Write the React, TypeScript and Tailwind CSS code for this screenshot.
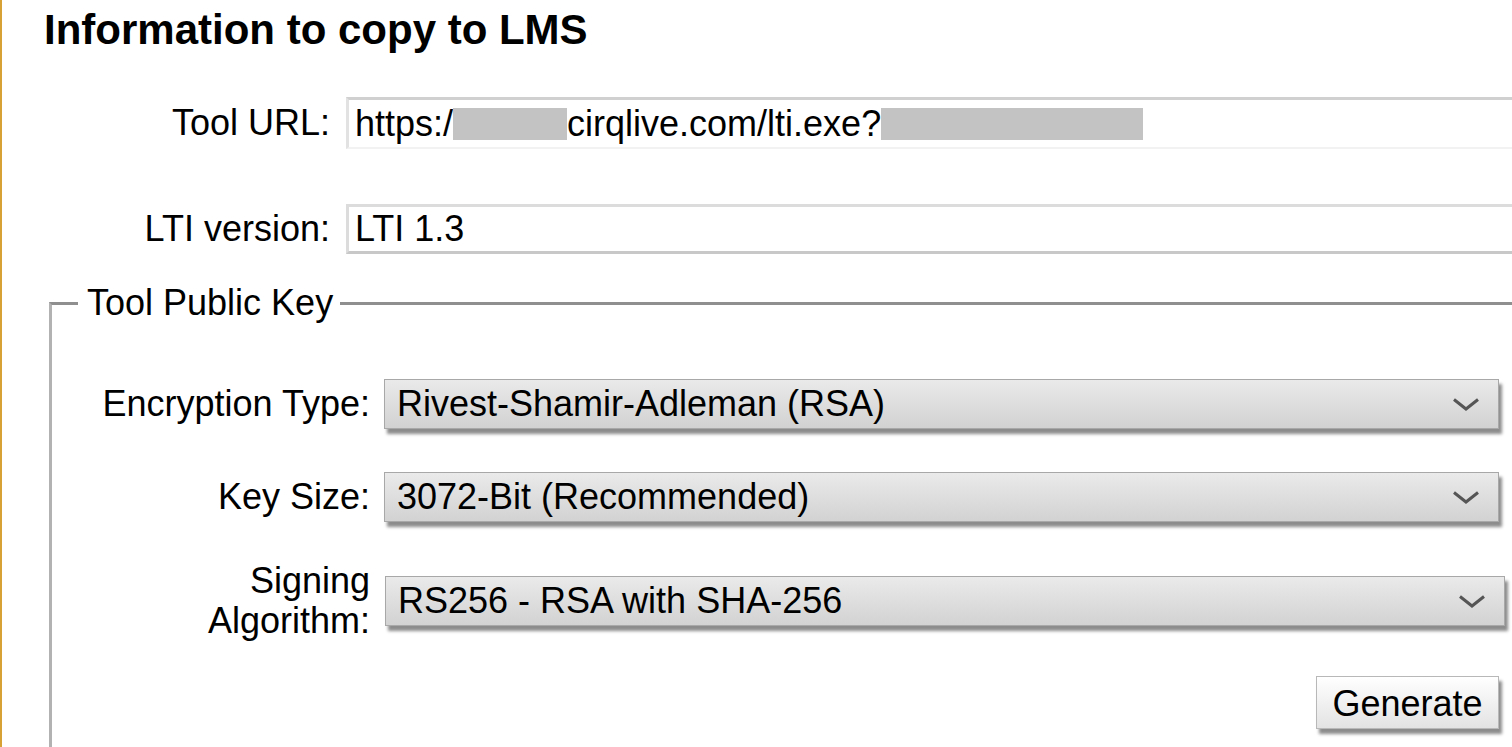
import React from 'react';

const Chevron = () => (
  <svg width="28" height="15" viewBox="0 0 28 15" className="shrink-0">
    <path d="M2 2.5 L14 12 L26 2.5" fill="none" stroke="#555" strokeWidth="3" />
  </svg>
);

function FakeSelect({ value, className = '' }: { value: string; className?: string }) {
  return (
    <div className={`flex items-center justify-between h-[50px] pl-[12px] pr-[18px] border border-[#a8a8a8] bg-linear-to-b from-[#eaeaea] via-[#dedede] to-[#d2d2d2] shadow-[3px_5px_3px_rgba(0,0,0,0.45)] ${className}`}>
      <span className="whitespace-nowrap">{value}</span>
      <Chevron />
    </div>
  );
}

export default function App() {
  return (
    <div className="flex w-screen h-[747px] overflow-hidden bg-white text-black font-['Liberation_Sans',Arial,sans-serif] text-[36px]">
      {/* bordure orange de la page */}
      <div className="w-[2px] shrink-0 bg-[#d8a135]" />

      <div className="pl-[42px] shrink-0">
        <h2 className="pt-[9px] text-[42px] leading-[41px] font-bold">Information to copy to LMS</h2>

        {/* Tool URL */}
        <div className="flex items-center gap-[16px] mt-[46px]">
          <div className="w-[286px] text-right">Tool URL:</div>
          <div className="flex items-center w-[1200px] h-[52px] pl-[6px] border-t-[3px] border-t-[#d0d0d0] border-l-[3px] border-l-[#e2e2e2] border-b-[2px] border-b-[#f2f2f2] whitespace-nowrap">
            <span>https:/</span>
            <span className="inline-block w-[114px] h-[32px] bg-[#c3c3c3]" />
            <span>cirqlive.com/lti.exe?</span>
            <span className="inline-block w-[262px] h-[32px] bg-[#c3c3c3]" />
          </div>
        </div>

        {/* LTI version */}
        <div className="flex items-center gap-[16px] mt-[52px]">
          <div className="w-[286px] text-right">LTI version:</div>
          <div className="flex items-center w-[1200px] h-[50px] pl-[6px] border-[3px] border-[#dcdcdc] border-b-[#c8c8c8] border-r-0">
            LTI 1.3
          </div>
        </div>

        {/* Tool Public Key */}
        <fieldset className="mt-[28px] ml-[5px] w-[1480px] pb-[80px] p-0 border-t-[3px] border-t-[#8f8f8f] border-l-[3px] border-l-[#b2b2b2]">
          <legend className="ml-[26px] pl-[9px] pr-[7px] text-[36px] leading-[38px]">Tool Public Key</legend>

          <div className="flex flex-col mt-[57px] pb-[80px]">
            <div className="flex items-center gap-[14px]">
              <div className="w-[318px] text-right leading-[40px]">Encryption Type:</div>
              <FakeSelect value="Rivest-Shamir-Adleman (RSA)" className="w-[1115px]" />
            </div>

            <div className="flex items-center gap-[14px] mt-[43px]">
              <div className="w-[318px] text-right leading-[40px]">Key Size:</div>
              <FakeSelect value="3072-Bit (Recommended)" className="w-[1115px]" />
            </div>

            <div className="flex items-center gap-[14px] mt-[39px]">
              <div className="w-[318px] text-right leading-[40px]">
                Signing
                <br />
                Algorithm:
              </div>
              <FakeSelect value="RS256 - RSA with SHA-256" className="w-[1120px] ml-[1px]" />
            </div>

            <div className="flex w-[1447px] justify-end mt-[35px]">
              <button className="w-[183px] h-[53px] border border-[#b8b8b8] bg-linear-to-b from-white to-[#e3e3e3] shadow-[3px_5px_3px_rgba(0,0,0,0.45)]">
                Generate
              </button>
            </div>
          </div>
        </fieldset>
      </div>
    </div>
  );
}
